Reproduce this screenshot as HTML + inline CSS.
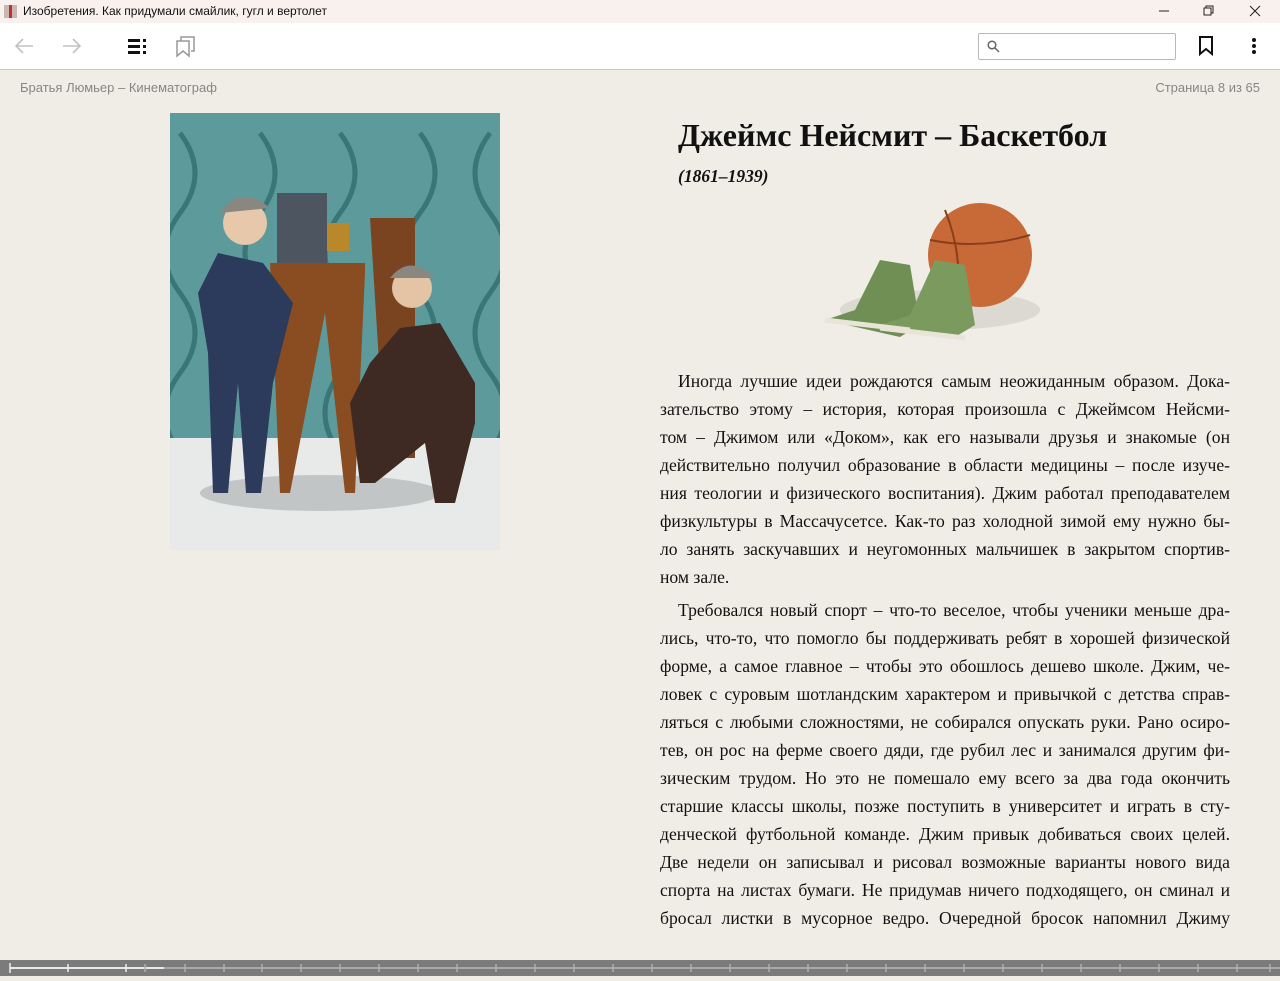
<!DOCTYPE html>
<html><head><meta charset="utf-8"><style>
*{margin:0;padding:0;box-sizing:border-box}
body{width:1280px;height:976px;overflow:hidden;background:#f0ede7;font-family:"Liberation Sans",sans-serif;position:relative}
.title{position:absolute;left:0;top:0;width:1280px;height:23px;background:#f8f1ee;font-size:12px;color:#111}
.title span{position:absolute;left:23px;top:4px}
.tb{position:absolute;left:0;top:23px;width:1280px;height:47px;background:#fff;border-bottom:1px solid #c9c9c9}
.hdr{position:absolute;top:80px;font-size:13px;color:#8a8580}
.txt{position:absolute;left:660px;width:570px;font-family:"Liberation Serif",serif;font-size:17.6px;color:#111}
.txt div{height:28px;line-height:28px;text-align:justify;text-align-last:justify;white-space:nowrap;overflow:hidden}
.txt div.l{text-align-last:left}
.txt span.i{display:inline-block;width:18px}
.bar{position:absolute;left:0;top:960px;width:1280px;height:16px;background:#7b7b7b}
</style></head><body>
<div class="title"><svg style="position:absolute;left:4px;top:5px" width="14" height="13"><rect x="0" y="0" width="6" height="13" fill="#c8b8b0"/><rect x="7" y="0" width="6" height="13" fill="#c8b8b0"/><rect x="5" y="0" width="3" height="13" fill="#c03030"/></svg><span>Изобретения. Как придумали смайлик, гугл и вертолет</span>
<svg style="position:absolute;left:1156px;top:4px" width="110" height="14" stroke="#222" fill="none" stroke-width="1"><line x1="3" y1="7" x2="13" y2="7"/><rect x="48" y="4" width="7" height="7"/><path d="M50 4V2h7v7h-2"/><path d="M94 2l10 10M104 2l-10 10"/></svg></div>
<div class="tb">
<svg style="position:absolute;left:14px;top:14px" width="20" height="18" stroke="#c2c2c2" stroke-width="1.6" fill="none"><path d="M19 9H2M9 2L2 9l7 7"/></svg>
<svg style="position:absolute;left:62px;top:14px" width="20" height="18" stroke="#c2c2c2" stroke-width="1.6" fill="none"><path d="M1 9h17M11 2l7 7-7 7"/></svg>
<svg style="position:absolute;left:128px;top:16px" width="20" height="16" fill="#111"><rect x="0" y="0" width="12" height="3"/><rect x="0" y="6" width="12" height="3"/><rect x="0" y="12" width="12" height="3"/><rect x="15" y="0" width="3" height="3"/><rect x="15" y="6" width="3" height="3"/><rect x="15" y="12" width="3" height="3"/></svg>
<svg style="position:absolute;left:176px;top:13px" width="20" height="22" stroke="#999" stroke-width="1.5" fill="none"><path d="M1 5h12v15l-6-5-6 5z"/><path d="M5 5V1h13v14h-3"/></svg>
<div style="position:absolute;left:978px;top:10px;width:198px;height:27px;border:1px solid #b8b8b8;border-radius:2px"><svg style="position:absolute;left:8px;top:6px" width="13" height="13" stroke="#666" stroke-width="1.5" fill="none"><circle cx="5" cy="5" r="3.8"/><path d="M8 8l4 4"/></svg></div>
<svg style="position:absolute;left:1198px;top:13px" width="16" height="20" stroke="#111" stroke-width="2" fill="none"><path d="M2 1h12v17l-6-5-6 5z"/></svg>
<svg style="position:absolute;left:1251px;top:14px" width="6" height="18" fill="#111"><circle cx="3" cy="3" r="2"/><circle cx="3" cy="9" r="2"/><circle cx="3" cy="15" r="2"/></svg>
</div>
<div class="hdr" style="left:20px">Братья Люмьер – Кинематограф</div>
<div class="hdr" style="right:20px">Страница 8 из 65</div>

<svg style="position:absolute;left:170px;top:113px" width="330" height="437">
<rect width="330" height="437" fill="#ecebe7"/>
<rect width="330" height="325" fill="#5d9a9c"/>
<g fill="none" stroke="#2f6e70" stroke-width="5" opacity=".8">
<path d="M10 20q30 40 0 80q-30 40 0 80q30 40 0 80q-30 40 0 80"/><path d="M90 20q30 40 0 80q-30 40 0 80q30 40 0 80q-30 40 0 80"/><path d="M170 20q30 40 0 80q-30 40 0 80q30 40 0 80q-30 40 0 80"/><path d="M250 20q30 40 0 80q-30 40 0 80q30 40 0 80q-30 40 0 80"/><path d="M320 20q-30 40 0 80q30 40 0 80q-30 40 0 80q30 40 0 80"/></g>
<rect y="325" width="330" height="112" fill="#e8eaea"/>
<ellipse cx="150" cy="380" rx="120" ry="18" fill="#9aa0a0" opacity=".5"/>
<path d="M100 150h95v10l-10 220h-10l-20-180-35 180h-10z" fill="#8a4d22"/>
<path d="M200 105h45v240h-10v-80h-25z" fill="#7a4420"/>
<rect x="107" y="80" width="50" height="70" fill="#4d5660"/><rect x="157" y="110" width="22" height="28" fill="#b8882a"/>
<path d="M48 140l45 10 30 40-20 80-12 110h-15l-8-110-10 110h-15l-5-140-10-60z" fill="#2c3a5c"/>
<circle cx="75" cy="110" r="22" fill="#e8c8aa"/><path d="M50 100q20-30 50-5" fill="#8a8680"/>
<path d="M230 215l40-5 35 60 0 40-20 80h-20l-10-60-50 40h-15l-10-80 20-40z" fill="#3e2a22"/>
<circle cx="242" cy="175" r="20" fill="#e4c4a4"/><path d="M220 165q20-25 45 0" fill="#8a8680"/>
</svg>

<div style="position:absolute;left:678px;top:117px;font-family:'Liberation Serif',serif;font-weight:bold;font-size:32px;color:#111">Джеймс Нейсмит – Баскетбол</div>
<div style="position:absolute;left:678px;top:166px;font-family:'Liberation Serif',serif;font-weight:bold;font-style:italic;font-size:17.5px;color:#111">(1861–1939)</div>

<svg style="position:absolute;left:820px;top:200px" width="225" height="142">
<ellipse cx="120" cy="110" rx="100" ry="20" fill="#cfcac4" opacity=".6"/>
<circle cx="160" cy="55" r="52" fill="#c86a38"/>
<path d="M110 40q50 10 100 -5M125 10q20 50 10 95" stroke="#8a3e1c" stroke-width="2" fill="none"/>
<path d="M5 120l30-10 25-50 30 5 10 60-20 12z" fill="#6f8f55"/>
<path d="M60 125l30-10 25-55 30 5 10 60-20 12z" fill="#7a9a5e"/>
<path d="M5 120l85 10M60 128l85 10" stroke="#e8e4d8" stroke-width="5"/>
</svg>

<div class="txt" style="top:367px">
<div><span class="i"></span>Иногда лучшие идеи рождаются самым неожиданным образом. Дока-</div>
<div>зательство этому – история, которая произошла с Джеймсом Нейсми-</div>
<div>том – Джимом или «Доком», как его называли друзья и знакомые (он</div>
<div>действительно получил образование в области медицины – после изуче-</div>
<div>ния теологии и физического воспитания). Джим работал преподавателем</div>
<div>физкультуры в Массачусетсе. Как-то раз холодной зимой ему нужно бы-</div>
<div>ло занять заскучавших и неугомонных мальчишек в закрытом спортив-</div>
<div class="l">ном зале.</div>
</div>
<div class="txt" style="top:596px">
<div><span class="i"></span>Требовался новый спорт – что-то веселое, чтобы ученики меньше дра-</div>
<div>лись, что-то, что помогло бы поддерживать ребят в хорошей физической</div>
<div>форме, а самое главное – чтобы это обошлось дешево школе. Джим, че-</div>
<div>ловек с суровым шотландским характером и привычкой с детства справ-</div>
<div>ляться с любыми сложностями, не собирался опускать руки. Рано осиро-</div>
<div>тев, он рос на ферме своего дяди, где рубил лес и занимался другим фи-</div>
<div>зическим трудом. Но это не помешало ему всего за два года окончить</div>
<div>старшие классы школы, позже поступить в университет и играть в сту-</div>
<div>денческой футбольной команде. Джим привык добиваться своих целей.</div>
<div>Две недели он записывал и рисовал возможные варианты нового вида</div>
<div>спорта на листах бумаги. Не придумав ничего подходящего, он сминал и</div>
<div>бросал листки в мусорное ведро. Очередной бросок напомнил Джиму</div>
</div>

<div class="bar"><svg width="1280" height="16">
<line x1="10" y1="8" x2="1280" y2="8" stroke="#a8a8a8" stroke-width="2"/>
<line x1="10" y1="8" x2="164" y2="8" stroke="#e8e8e8" stroke-width="2"/>
<g stroke="#b0b0b0" stroke-width="1.5">
<line x1="10" y1="3" x2="10" y2="13" stroke="#eee"/><line x1="68" y1="4" x2="68" y2="12" stroke="#eee"/><line x1="126" y1="4" x2="126" y2="12" stroke="#eee"/><line x1="145" y1="4" x2="145" y2="12"/>
<line x1="185" y1="4" x2="185" y2="12"/><line x1="224" y1="4" x2="224" y2="12"/><line x1="262" y1="4" x2="262" y2="12"/><line x1="301" y1="4" x2="301" y2="12"/><line x1="340" y1="4" x2="340" y2="12"/><line x1="379" y1="4" x2="379" y2="12"/><line x1="418" y1="4" x2="418" y2="12"/><line x1="457" y1="4" x2="457" y2="12"/><line x1="496" y1="4" x2="496" y2="12"/><line x1="535" y1="4" x2="535" y2="12"/><line x1="574" y1="4" x2="574" y2="12"/><line x1="613" y1="4" x2="613" y2="12"/><line x1="652" y1="4" x2="652" y2="12"/><line x1="691" y1="4" x2="691" y2="12"/><line x1="730" y1="4" x2="730" y2="12"/><line x1="769" y1="4" x2="769" y2="12"/><line x1="808" y1="4" x2="808" y2="12"/><line x1="847" y1="4" x2="847" y2="12"/><line x1="886" y1="4" x2="886" y2="12"/><line x1="925" y1="4" x2="925" y2="12"/><line x1="964" y1="4" x2="964" y2="12"/><line x1="1003" y1="4" x2="1003" y2="12"/><line x1="1042" y1="4" x2="1042" y2="12"/><line x1="1081" y1="4" x2="1081" y2="12"/><line x1="1120" y1="4" x2="1120" y2="12"/><line x1="1159" y1="4" x2="1159" y2="12"/><line x1="1198" y1="4" x2="1198" y2="12"/><line x1="1237" y1="4" x2="1237" y2="12"/><line x1="1270" y1="4" x2="1270" y2="12"/>
</g></svg></div>
</body></html>
